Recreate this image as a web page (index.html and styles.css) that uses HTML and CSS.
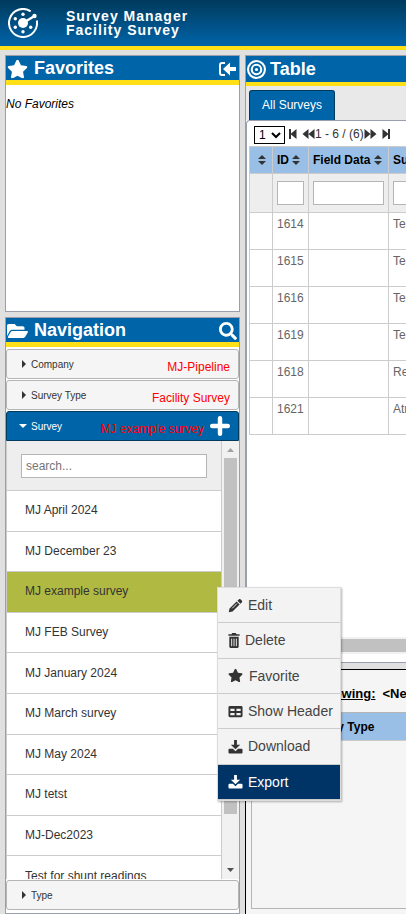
FILE: index.html
```
<!DOCTYPE html>
<html lang="en">
<head>
  <meta charset="UTF-8">
  <meta name="viewport" content="width=device-width, initial-scale=1.0">
  <title>Survey Manager</title>
  <link rel="stylesheet" href="styles.css">
</head>
<body>
  <svg class="defs" width="0" height="0">
    <symbol id="star" viewBox="0 0 576 512"><path d="M259.3 17.8L194 150.2 47.9 171.5c-26.2 3.8-36.7 36.1-17.7 54.6l105.7 103-25 145.5c-4.5 26.3 23.2 46 46.4 33.7L288 439.6l130.7 68.7c23.2 12.2 50.9-7.4 46.4-33.7l-25-145.5 105.7-103c19-18.5 8.5-50.8-17.7-54.6L382 150.2 316.7 17.8c-11.7-23.6-45.6-23.9-57.4 0z"/></symbol>
    <symbol id="sort" viewBox="0 0 8 10"><path d="M4 0L8 4H0zM0 6h8L4 10z"/></symbol>
    <symbol id="download" viewBox="0 0 16 16"><path d="M6.500 1h3v5h3.500L8 11 3 6h3.500zM1.500 10.500h3.800L8 13l2.700-2.500h3.800c.6 0 1 .4 1 1v3c0 .6-.4 1-1 1h-13c-.6 0-1-.4-1-1v-3c0-.6.4-1 1-1z"/></symbol>
  </svg>

  <header class="header">
    <svg class="logo" viewBox="0 0 30 30" fill="#fff">
      <path d="M22.700 3.300A14 14 0 1 0 28.800 12.500" fill="none" stroke="#fff" stroke-width="2"/>
      <circle cx="15" cy="15" r="5"/>
      <path d="M15 15L26.500 8" stroke="#fff" stroke-width="2.500"/>
      <circle cx="26.500" cy="8" r="2.200"/>
      <circle cx="15" cy="6.300" r="1.700"/><circle cx="7.300" cy="10.700" r="1.700"/><circle cx="7.300" cy="19.300" r="1.700"/>
      <circle cx="15" cy="23.700" r="1.700"/><circle cx="22.700" cy="19.300" r="1.700"/>
    </svg>
    <h1 class="title">Survey Manager<br>Facility Survey</h1>
  </header>

  <main class="main">
    <div class="left">
      <section class="panel favorites">
        <div class="panel-head">
          <svg class="head-icon" viewBox="0 0 576 512"><use href="#star"/></svg>
          <h2 class="head-text">Favorites</h2>
          <button class="head-btn" aria-label="Collapse">
            <svg width="19" height="16" viewBox="0 0 19 16"><path d="M7 2H4Q2 2 2 4v8q0 2 2 2h3" fill="none" stroke="#fff" stroke-width="2"/><path d="M5 8l7-6.500V6h6v4h-6v4.500z" fill="#fff"/></svg>
          </button>
        </div>
        <p class="empty">No Favorites</p>
      </section>

      <section class="panel navigation">
        <div class="panel-head">
          <svg class="head-icon folder" viewBox="0 0 576 512"><path d="M572.694 292.093L500.270 416.248A63.997 63.997 0 0 1 444.989 448H45.025c-18.523 0-30.064-20.093-20.731-36.093l72.424-124.155A64 64 0 0 1 152 256h399.964c18.523 0 30.064 20.093 20.730 36.093zM152 224h328v-48c0-26.510-21.490-48-48-48H272l-64-64H48C21.490 64 0 85.490 0 112v278.046l69.077-118.418C86.214 242.250 117.989 224 152 224z"/></svg>
          <h2 class="head-text">Navigation</h2>
          <button class="head-btn" aria-label="Search">
            <svg width="18" height="18" viewBox="0 0 512 512"><path fill="#fff" d="M505 442.700L405.300 343c-4.500-4.500-10.600-7-17-7H372c27.600-35.300 44-79.700 44-128C416 93.100 322.900 0 208 0S0 93.100 0 208s93.100 208 208 208c48.300 0 92.700-16.400 128-44v16.300c0 6.400 2.500 12.500 7 17l99.700 99.700c9.400 9.400 24.600 9.400 33.900 0l28.300-28.300c9.400-9.400 9.400-24.600.1-34zM208 336c-70.700 0-128-57.200-128-128 0-70.700 57.200-128 128-128 70.700 0 128 57.200 128 128 0 70.700-57.200 128-128 128z"/></svg>
          </button>
        </div>
        <div class="accordion">
          <button class="acc"><span class="arrow"></span><span class="acc-name">Company</span><span class="acc-value">MJ-Pipeline</span></button>
          <button class="acc"><span class="arrow"></span><span class="acc-name">Survey Type</span><span class="acc-value">Facility Survey</span></button>
          <button class="acc open"><span class="arrow down"></span><span class="acc-name">Survey</span><span class="acc-value">MJ example survey</span>
            <svg class="plus" width="18" height="18" viewBox="0 0 18 18"><path d="M9 2v14M2 9h14" stroke="#fff" stroke-width="4" stroke-linecap="round"/></svg>
          </button>
          <div class="list-wrap">
            <div class="list">
              <div class="search"><input class="search-input" type="text" placeholder="search..." aria-label="Search surveys"></div>
              <ul class="surveys">
                <li>MJ April 2024</li>
                <li>MJ December 23</li>
                <li class="selected">MJ example survey</li>
                <li>MJ FEB Survey</li>
                <li>MJ January 2024</li>
                <li>MJ March survey</li>
                <li>MJ May 2024</li>
                <li>MJ tetst</li>
                <li>MJ-Dec2023</li>
                <li>Test for shunt readings</li>
              </ul>
            </div>
            <div class="scrollbar">
              <svg width="7" height="4" viewBox="0 0 7 4"><path d="M0 4L3.500 0 7 4z" fill="#a3a3a3"/></svg>
              <div class="track"><div class="thumb"></div></div>
              <svg width="7" height="4" viewBox="0 0 7 4"><path d="M0 0h7L3.500 4z" fill="#505050"/></svg>
            </div>
          </div>
          <button class="acc last"><span class="arrow"></span><span class="acc-name">Type</span></button>
        </div>
      </section>
    </div>

    <div class="right">
      <section class="panel table-panel">
        <div class="panel-head tall">
          <svg class="head-icon target" viewBox="0 0 18 18" fill="none" stroke="#fff" stroke-width="2"><circle cx="9" cy="9" r="8"/><circle cx="9" cy="9" r="4.500"/><circle cx="9" cy="9" r="1.500" fill="#fff" stroke="none"/></svg>
          <h2 class="head-text">Table</h2>
        </div>
        <div class="tabs"><button class="tab">All Surveys</button></div>
        <div class="content">
          <div class="pager">
            <select class="page" aria-label="Page"><option>1</option></select>
            <button class="pg first" aria-label="First page"><svg width="8" height="10" viewBox="0 0 8 10"><path d="M0 0h2v4.500L7.500 0v10L2 5.500V10H0z"/></svg></button>
            <button class="pg" aria-label="Previous page"><svg width="13" height="10" viewBox="0 0 12 10"><path d="M6 0v10L0 5zM12 0v10L6 5z"/></svg></button>
            <span>1 - 6 / (6)</span>
            <button class="pg" aria-label="Next page"><svg width="13" height="10" viewBox="0 0 12 10"><path d="M0 0l6 5-6 5zM6 0l6 5-6 5z"/></svg></button>
            <button class="pg end" aria-label="Last page"><svg width="8" height="10" viewBox="0 0 8 10"><path d="M8 0H6v4.500L.5 0v10L6 5.500V10h2z"/></svg></button>
          </div>
          <div class="table-wrap">
            <table class="table">
              <colgroup><col class="c-sort"><col class="c-id"><col class="c-data"><col class="c-name"></colgroup>
              <thead>
                <tr class="names">
                  <th><svg class="sort"><use href="#sort"/></svg></th>
                  <th>ID <svg class="sort"><use href="#sort"/></svg></th>
                  <th>Field Data <svg class="sort"><use href="#sort"/></svg></th>
                  <th>Survey Name</th>
                </tr>
                <tr class="filters">
                  <td></td>
                  <td><input type="text" aria-label="Filter ID"></td>
                  <td><input type="text" aria-label="Filter Field Data"></td>
                  <td><input type="text" aria-label="Filter Survey Name"></td>
                </tr>
              </thead>
              <tbody>
                <tr><td></td><td>1614</td><td></td><td>Test survey</td></tr>
                <tr><td></td><td>1615</td><td></td><td>Test survey</td></tr>
                <tr><td></td><td>1616</td><td></td><td>Test survey</td></tr>
                <tr><td></td><td>1619</td><td></td><td>Test survey</td></tr>
                <tr><td></td><td>1618</td><td></td><td>Rectifier</td></tr>
                <tr><td></td><td>1621</td><td></td><td>Atmospheric</td></tr>
              </tbody>
            </table>
          </div>
          <div class="hscroll"><div class="hthumb"></div></div>
        </div>
      </section>

      <section class="detail">
        <p class="showing"><u>Showing:</u> <span>&lt;New Survey&gt;</span></p>
        <div class="detail-box">
          <div class="detail-head">Survey Type</div>
        </div>
      </section>
    </div>
  </main>

  <div class="menu">
    <button class="item"><svg viewBox="0 0 16 16"><path d="M11.500 1.500c.6-.6 1.400-.6 2 0l1.200 1.200c.6.600.6 1.400 0 2L13.300 6.100 10 2.900zM9.200 3.700l3.200 3.200-7.600 7.600L.8 15.300l.8-4z"/><path d="M9.500 6L4.500 11" stroke="#f3f3f3"/></svg>Edit</button>
    <button class="item trash"><svg viewBox="0 0 12 16"><path d="M4 0h4l.6 1.200H12V3H0V1.200h3.400zM1 4h10v10.500c0 .8-.5 1.500-1.300 1.500H2.300C1.500 16 1 15.300 1 14.500z"/><path d="M3.500 6v8M6 6v8M8.500 6v8" stroke="#f3f3f3"/></svg>Delete</button>
    <button class="item fav"><svg viewBox="0 0 576 512"><use href="#star"/></svg>Favorite</button>
    <button class="item"><svg viewBox="0 0 16 16" fill-rule="evenodd"><path d="M2 2h12a1.500 1.500 0 0 1 1.500 1.500v9A1.500 1.500 0 0 1 14 14H2A1.500 1.500 0 0 1 .5 12.500v-9A1.500 1.500 0 0 1 2 2zM2.500 5v2.500H7V5zM9 5v2.500h4.500V5zM2.500 9.500V12H7V9.500zM9 9.500V12h4.500V9.500z"/></svg>Show Header</button>
    <button class="item"><svg><use href="#download"/></svg>Download</button>
    <button class="item active"><svg><use href="#download"/></svg>Export</button>
  </div>
</body>
</html>
```
FILE: styles.css
```
* {
  box-sizing: border-box;
}
body {
  margin: 0;
  height: 100vh;
  display: flex;
  flex-direction: column;
  overflow: hidden;
  background: #e0e0e0;
  color: #333;
  font-family: "Liberation Sans", Arial, sans-serif;
  font-size: 12px;
}
button, input, select {
  font-family: inherit;
  font-size: 12px;
}
button {
  border: none;
  background: none;
  padding: 0;
  color: inherit;
  cursor: pointer;
}
svg {
  flex: none;
}
.defs {
  position: absolute;
}
.header {
  flex: none;
  height: 50px;
  display: flex;
  align-items: center;
  gap: 28px;
  padding-left: 8px;
  background: linear-gradient(#003a5d, #0064a8);
  border-bottom: 4px solid #ffe017;
}
.logo {
  width: 30px;
  height: 30px;
}
.title {
  margin: 0;
  color: #fff;
  font-size: 14px;
  line-height: 14px;
  letter-spacing: 1px;
}
.main {
  flex: 1;
  min-height: 0;
  display: flex;
  gap: 5px;
  padding: 5px 0 0 5px;
}
.left {
  flex: none;
  width: 235px;
  display: flex;
  flex-direction: column;
  gap: 5px;
}
.right {
  flex: 1;
  min-width: 0;
  display: flex;
  flex-direction: column;
  gap: 6px;
}
.panel {
  display: flex;
  flex-direction: column;
  background: #fff;
  border: 1px solid #9a9fae;
}
.favorites {
  height: 257px;
}
.navigation {
  flex: 1;
  min-height: 0;
}
.panel-head {
  flex: none;
  height: 29px;
  display: flex;
  align-items: center;
  padding: 1px 2px 0 1px;
  background: #0064a8;
  border-bottom: 5px solid #ffe017;
  color: #fff;
}
.tall {
  height: 30px;
  border-bottom-width: 4px;
}
.head-icon {
  width: 21px;
  height: 20px;
  margin-right: 6px;
  fill: #fff;
}
.target {
  width: 19px;
  height: 19px;
  margin-right: 4px;
  fill: none;
}
.head-text {
  flex: 1;
  margin: 0;
  font-size: 18px;
}
.head-btn {
  display: flex;
}
.empty {
  margin: 12px 0 0;
  color: #000;
  font-style: italic;
}
.accordion {
  flex: 1;
  min-height: 0;
  display: flex;
  flex-direction: column;
  gap: 1px;
  padding: 2px 0 3px;
}
.acc {
  flex: none;
  height: 30px;
  display: flex;
  align-items: center;
  padding: 0 8px 0 15px;
  background: #f5f5f5;
  border: 1px solid #b5b5b5;
  border-radius: 3px;
  text-align: left;
}
.arrow {
  width: 4px;
  height: 8px;
  margin-right: 5px;
  background: #333;
  clip-path: polygon(0 0, 100% 50%, 0 100%);
}
.acc-name {
  flex: 1;
  font-size: 10px;
}
.acc-value {
  padding-top: 6px;
  color: #f00;
}
.open {
  padding-left: 12px;
  background: #0064a8;
  border-color: #003a5d;
  border-radius: 3px 3px 0 0;
  color: #fff;
}
.down {
  width: 8px;
  height: 4px;
  margin-right: 4px;
  background: #fff;
  clip-path: polygon(0 0, 100% 0, 50% 100%);
}
.open .acc-value {
  margin-right: 6px;
}
.plus {
  width: 20px;
  height: 20px;
}
.list-wrap {
  flex: 1;
  min-height: 0;
  display: flex;
  margin-top: -1px;
  border-left: 1px solid #ccc;
}
.list {
  flex: 1;
  overflow: hidden;
  border-right: 1px solid #ccc;
}
.search {
  height: 50px;
  padding: 13px 14px;
  background: #eee;
  border-bottom: 1px solid #ccc;
}
.search-input {
  display: block;
  width: 100%;
  height: 24px;
  padding: 0 4px;
  border: 1px solid #b5b5b5;
}
.surveys {
  height: 406px;
  display: grid;
  grid-auto-rows: 1fr;
  margin: 0;
  padding: 0;
  list-style: none;
}
.surveys li {
  display: flex;
  align-items: center;
  padding: 0 0 1px 18px;
  border-bottom: 1px solid #ccc;
}
.surveys .selected {
  background: #b0ba43;
}
.scrollbar {
  width: 17px;
  display: flex;
  flex-direction: column;
  align-items: center;
  gap: 6px;
  padding: 7px 0;
  background: #f1f1f1;
}
.track {
  flex: 1;
}
.thumb {
  width: 13px;
  height: 88%;
  background: #c1c1c1;
}
.table-panel {
  flex: 1;
  min-height: 0;
  border-right: none;
}
.tabs {
  flex: none;
  display: flex;
  padding: 4px 3px 0;
  background: #e9e9e9;
}
.tab {
  height: 30px;
  padding: 0 12px 2px;
  background: #0064a8;
  border: 1px solid #003a5d;
  border-bottom: none;
  border-radius: 3px 3px 0 0;
  color: #fff;
}
.content {
  flex: 1;
  min-height: 0;
  display: flex;
  flex-direction: column;
  padding-left: 2px;
  border: 1px solid #9a9fae;
  border-width: 1px 0 0 1px;
  border-radius: 4px 0 0 0;
}
.pager {
  flex: none;
  height: 25px;
  display: flex;
  align-items: center;
  padding-left: 5px;
}
.page {
  width: 31px;
  height: 18px;
  margin: 3px 4px 0 0;
  padding: 0;
  background: #fff;
  border: 1px solid #000;
}
.pg {
  display: flex;
  fill: #333;
}
.first {
  margin-right: 5px;
}
.end {
  margin-left: 5px;
}
.table-wrap {
  flex: 1;
  overflow: hidden;
}
.table {
  width: 520px;
  table-layout: fixed;
  border-collapse: collapse;
}
.c-sort {
  width: 23px;
}
.c-id {
  width: 36px;
}
.c-data {
  width: 80px;
}
.table th, .table td {
  padding: 0 4px;
  border: 1px solid #ccc;
  text-align: left;
  white-space: nowrap;
}
.names th {
  height: 27px;
  background: #9abfe7;
  color: #000;
}
.names th:first-child {
  padding-left: 8px;
}
.sort {
  width: 8px;
  height: 10px;
  vertical-align: -1px;
  fill: #333;
}
.filters td {
  height: 39px;
  background: #eee;
}
.filters input {
  display: block;
  width: 100%;
  height: 24px;
  border: 1px solid #b5b5b5;
}
.table tbody td {
  height: 37px;
  padding-top: 4px;
  color: #666;
  vertical-align: top;
}
.hscroll {
  flex: none;
  height: 17px;
  margin-bottom: 8px;
  padding: 2px 0 2px 17px;
  background: #f1f1f1;
}
.hthumb {
  height: 13px;
  background: #c1c1c1;
}
.detail {
  flex: none;
  height: 245px;
  display: flex;
  flex-direction: column;
  padding: 0 0 5px 5px;
  background: #f5f5f5;
  border: 1px solid #000;
  border-width: 1px 0 0 1px;
}
.showing {
  height: 42px;
  display: flex;
  align-items: center;
  gap: 7px;
  margin: 0;
  padding: 5px 0 0 66px;
  color: #000;
  font-size: 13px;
  font-weight: bold;
  white-space: nowrap;
}
.detail-box {
  flex: 1;
  border: 1px solid #b5b5b5;
  border-right: none;
}
.detail-head {
  height: 28px;
  padding-left: 52px;
  background: #9abfe7;
  border-bottom: 1px solid #ccc;
  color: #000;
  font-weight: bold;
  line-height: 28px;
}
/* context menu over the survey list */
.menu {
  position: absolute;
  top: 587px;
  left: 217px;
  width: 124px;
  height: 214px;
  display: grid;
  grid-auto-rows: 1fr;
  background: #f3f3f3;
  border: 1px solid #ddd;
  box-shadow: 1px 1px 2px rgba(0, 0, 0, 0.3);
}
.item {
  display: flex;
  align-items: center;
  gap: 5px;
  padding-left: 10px;
  border-bottom: 1px solid #ccc;
  color: #444;
  font-size: 14px;
  white-space: nowrap;
}
.item svg {
  width: 15px;
  height: 15px;
  fill: #333;
}
.trash svg {
  width: 12px;
}
.fav {
  gap: 6px;
}
.active {
  background: #003366;
  color: #fff;
}
.item.active svg {
  fill: #fff;
}
```
